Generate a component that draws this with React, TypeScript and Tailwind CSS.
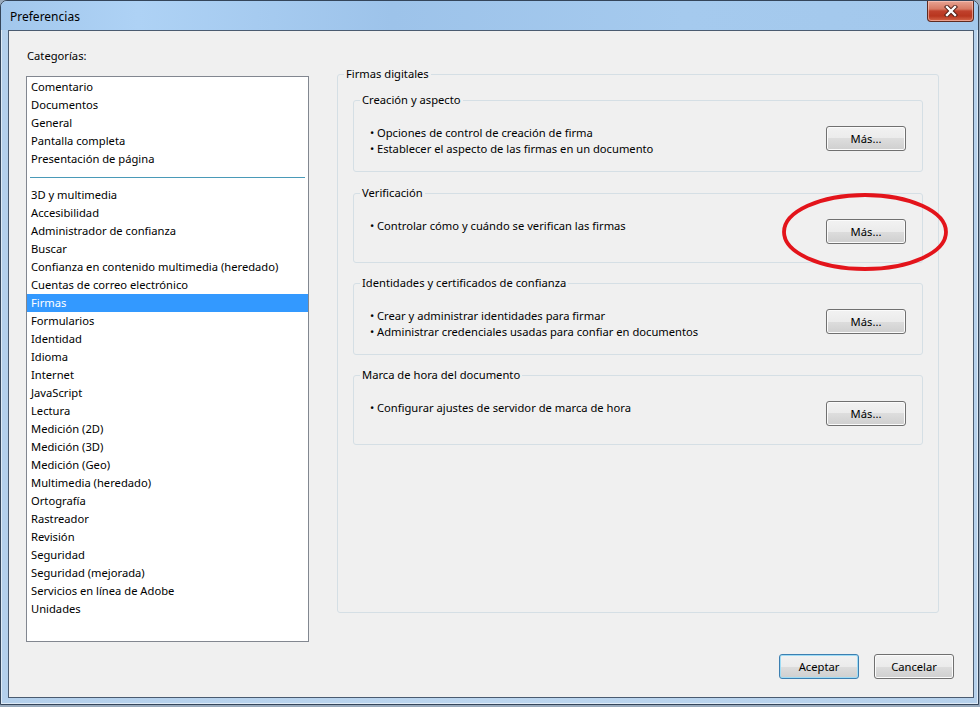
const topItems = ["Comentario", "Documentos", "General", "Pantalla completa", "Presentación de página"];

const items = [
  "3D y multimedia",
  "Accesibilidad",
  "Administrador de confianza",
  "Buscar",
  "Confianza en contenido multimedia (heredado)",
  "Cuentas de correo electrónico",
  "Firmas",
  "Formularios",
  "Identidad",
  "Idioma",
  "Internet",
  "JavaScript",
  "Lectura",
  "Medición (2D)",
  "Medición (3D)",
  "Medición (Geo)",
  "Multimedia (heredado)",
  "Ortografía",
  "Rastreador",
  "Revisión",
  "Seguridad",
  "Seguridad (mejorada)",
  "Servicios en línea de Adobe",
  "Unidades",
];

const groups = [
  {
    title: "Creación y aspecto",
    lines: ["Opciones de control de creación de firma", "Establecer el aspecto de las firmas en un documento"],
  },
  { title: "Verificación", lines: ["Controlar cómo y cuándo se verifican las firmas"] },
  {
    title: "Identidades y certificados de confianza",
    lines: ["Crear y administrar identidades para firmar", "Administrar credenciales usadas para confiar en documentos"],
  },
  { title: "Marca de hora del documento", lines: ["Configurar ajustes de servidor de marca de hora"] },
];

function WinButton({ label, primary = false, className = "" }: { label: string; primary?: boolean; className?: string }) {
  return (
    <button
      className={
        "h-[25px] w-[80px] rounded-[3px] border leading-[23px] text-black " +
        (primary
          ? "border-[#3c7fb1] bg-[linear-gradient(#f2f2f2_0%,#ebebeb_50%,#dddddd_50%,#cfcfcf_100%)] shadow-[inset_0_0_0_1px_#9fdcf5] "
          : "border-[#707070] bg-[linear-gradient(#f2f2f2_0%,#ebebeb_50%,#dddddd_50%,#cfcfcf_100%)] shadow-[inset_0_0_0_1px_#fbfbfb] ") +
        className
      }
    >
      {label}
    </button>
  );
}

function CloseButton() {
  return (
    <div className="flex h-[21px] w-[47px] items-center justify-center rounded-b-[4px] border border-t-0 border-[#5e2a20] bg-[linear-gradient(#e8a493_0%,#d77a64_40%,#c0412c_50%,#b8361f_75%,#d5674a_100%)] shadow-[inset_0_0_0_1px_rgba(255,210,200,0.55)]">
      <svg width="14" height="12" viewBox="0 0 14 12">
        <path d="M3 2 L11 10 M11 2 L3 10" stroke="#4a1a12" strokeWidth="4.2" strokeLinecap="square" />
        <path d="M3 2 L11 10 M11 2 L3 10" stroke="#ffffff" strokeWidth="2.4" strokeLinecap="square" />
      </svg>
    </div>
  );
}

function Row({ text, selected = false }: { text: string; selected?: boolean }) {
  return (
    <div className={"h-[18px] pl-[4px] leading-[18px] whitespace-nowrap " + (selected ? "bg-[#3399ff] text-white" : "")}>
      {text}
    </div>
  );
}

export default function App() {
  return (
    <div className="relative h-[707px] w-[980px] overflow-hidden bg-[#9aabbd] font-['Noto_Sans',sans-serif] text-[11.2px] text-black">
      <div className="flex h-[705px] w-[979px] flex-col rounded-t-[7px] border border-[#34455a] bg-[linear-gradient(90deg,#b4d0ec_0%,#bcd6ef_50%,#b6d1ec_100%)] shadow-[inset_0_0_0_1px_rgba(255,255,255,0.55)]">
        {/* title bar */}
        <div className="flex h-[29px] items-start justify-between rounded-t-[6px] bg-[linear-gradient(90deg,#a2c7ec_0%,#aed2f5_14%,#9dc3ea_40%,#a5caee_70%,#a3c8ec_100%)] pl-[9px] pr-[4px]">
          <span className="mt-[8px] text-[12px] leading-[16px]">Preferencias</span>
          <CloseButton />
        </div>

        {/* client area */}
        <div className="mb-[6px] ml-[7px] mr-[4px] flex flex-1 flex-col border border-[#4a5b70] bg-[#f0f0f0]">
          <div className="flex pl-[17px] pt-[17px]">
            <div className="w-[283px]">
              <div className="h-[16px] pl-[1px] leading-[16px]">Categorías:</div>
              <div className="mt-[12px] h-[566px] border border-[#828790] bg-white pt-px">
                {topItems.map((t) => (
                  <Row key={t} text={t} />
                ))}
                <div className="h-[18px] px-[3px] pt-[9px]">
                  <div className="h-px bg-[#4a9ab8]" />
                </div>
                {items.map((t) => (
                  <Row key={t} text={t} selected={t === "Firmas"} />
                ))}
              </div>
            </div>

            <fieldset className="ml-[28px] mt-[19px] h-[546px] w-[602px] rounded-[3px] border border-[#d5dfe5] px-[15px]">
              <legend className="ml-[-9px] px-[2px] leading-[14px]">Firmas digitales</legend>
              {groups.map((g, i) => (
                <fieldset
                  key={g.title}
                  className={
                    "rounded-[3px] border border-[#d5dfe5] " +
                    (i === 0 ? "mt-[12px]" : i === 1 ? "mt-[14px]" : "mt-[13px]")
                  }
                >
                  <legend className="ml-[6px] px-[2px] leading-[14px]">{g.title}</legend>
                  <div className="flex items-start justify-between pl-[16px] pr-[16px]">
                    <div className="pb-[14px] pt-[18px]">
                      {g.lines.map((l) => (
                        <div key={l} className="flex h-[16px] leading-[16px]">
                          <span className="w-[7px]">•</span>
                          <span>{l}</span>
                        </div>
                      ))}
                    </div>
                    <WinButton label="Más..." className="mb-[18px] mt-[19px]" />
                  </div>
                </fieldset>
              ))}
            </fieldset>
          </div>

          <div className="mt-[12px] flex justify-end gap-[15px] pr-[19px]">
            <WinButton label="Aceptar" primary />
            <WinButton label="Cancelar" />
          </div>
        </div>
      </div>

      {/* red annotation ellipse */}
      <svg className="absolute left-[780px] top-[191px]" width="172" height="82" viewBox="0 0 172 82">
        <ellipse cx="85" cy="41" rx="81" ry="37" fill="none" stroke="#e3141b" strokeWidth="3.8" />
      </svg>
    </div>
  );
}
